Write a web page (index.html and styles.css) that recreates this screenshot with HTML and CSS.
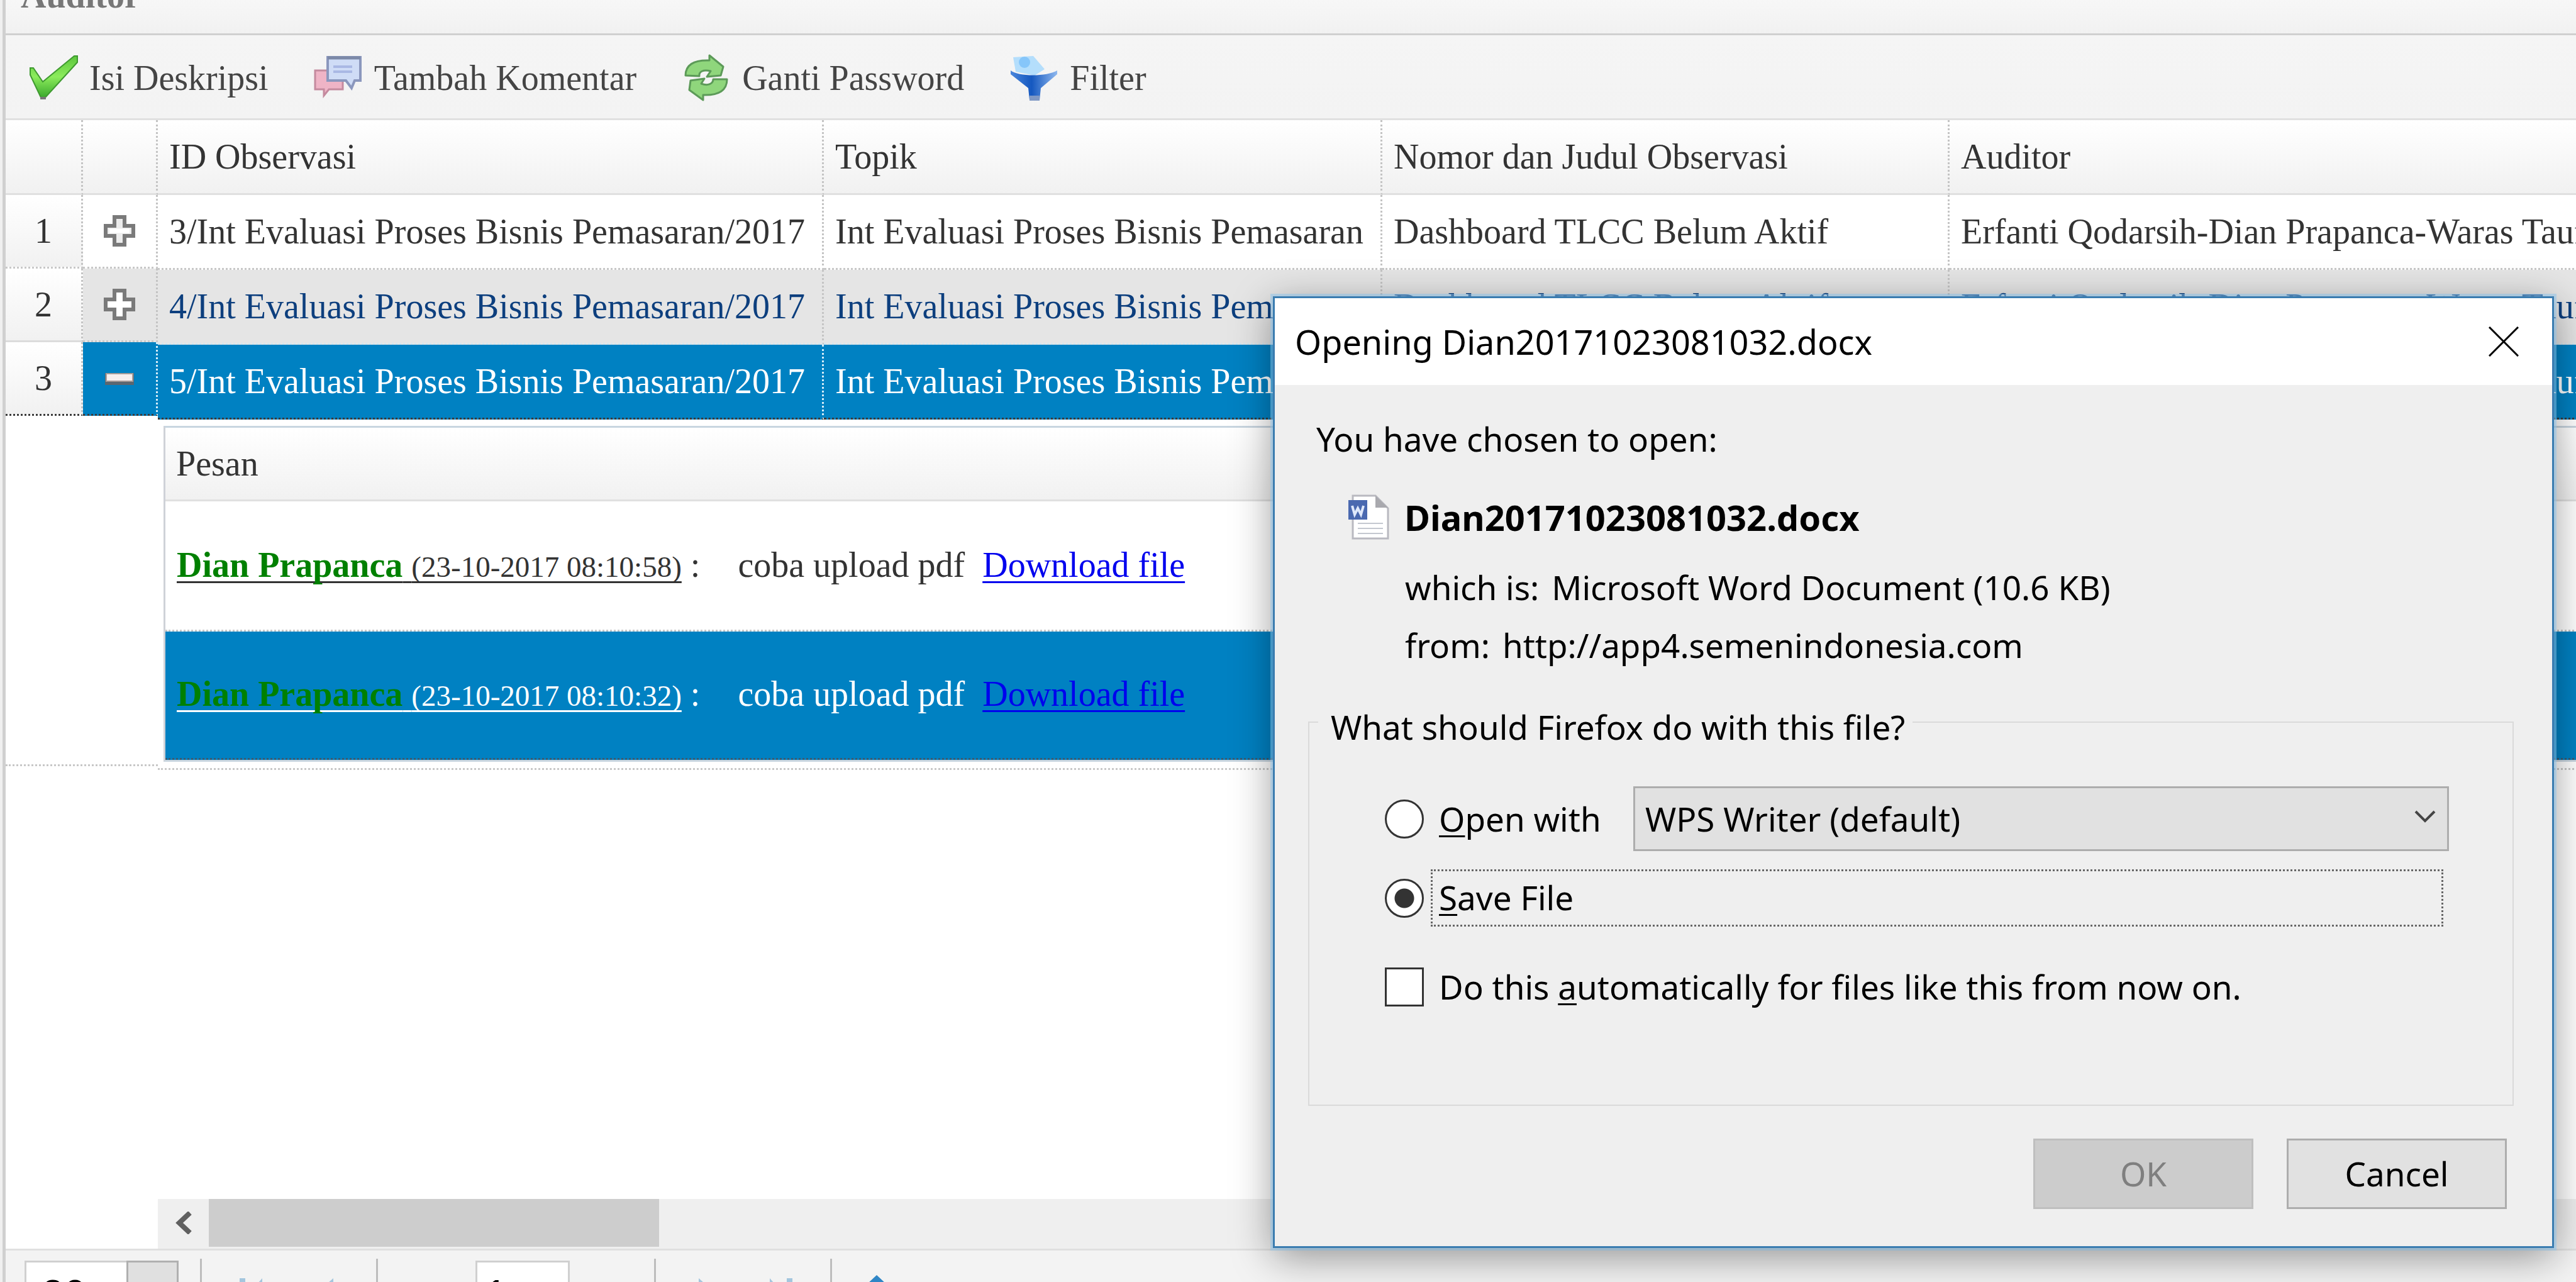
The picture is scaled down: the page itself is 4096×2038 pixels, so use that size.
FILE: index.html
```html
<!DOCTYPE html>
<html lang="id">
<head>
<meta charset="utf-8">
<title>Auditor</title>
<link rel="stylesheet" href="styles.css">
</head>
<body>
<main class="panel">
  <header class="panel-header"><h1 class="panel-title">Auditor</h1></header>

  <nav class="toolbar">
    <button class="tool" type="button">
      <svg class="tool-icon" viewBox="0 0 76 76" aria-hidden="true">
        <defs><linearGradient id="gCheck" x1="0" y1="0" x2="0" y2="1"><stop offset="0" stop-color="#5cc63c"/><stop offset=".5" stop-color="#8cec5c"/><stop offset="1" stop-color="#3aa82c"/></linearGradient></defs>
        <path d="M2 22 L7 22 L22 44 L72 3 L77 3 L77 13 L26 69 L19 69 L2 33 Z" fill="url(#gCheck)" stroke="#3f9a30" stroke-width="2"/>
        <path d="M18 70 h9" stroke="#777" stroke-width="4"/>
      </svg>
      Isi Deskripsi
    </button>
    <button class="tool" type="button">
      <svg class="tool-icon" viewBox="0 0 76 76" aria-hidden="true">
        <path d="M2 26 h44 v30 h-22 l-8 10 v-10 h-14 z" fill="#efb4c6" stroke="#c48a9e" stroke-width="3"/>
        <path d="M22 5 h52 v37 h-9 l-5 12 l-9 -12 h-29 z" fill="#cfdcf6" stroke="#8b97bd" stroke-width="4"/>
        <path d="M22 6 h52" stroke="#7c89a8" stroke-width="5"/>
        <path d="M31 20 h30 M31 28 h30" stroke="#a9b8e4" stroke-width="4"/>
      </svg>
      Tambah Komentar
    </button>
    <button class="tool" type="button">
      <svg class="tool-icon" viewBox="0 0 76 76" aria-hidden="true">
        <g fill="#8fd67c" stroke="#5c9a58" stroke-width="3" stroke-linejoin="round">
          <path d="M6 34 C6 18 18 9 44 10 L44 2 L66 20 L62 34 L40 36 L46 27 C34 24 27 28 28 35 Z"/>
          <path d="M72 40 C72 57 60 66 34 65 L34 73 L12 57 L14 42 L36 39 L31 47 C42 51 50 47 50 40 Z"/>
        </g>
      </svg>
      Ganti Password
    </button>
    <button class="tool" type="button">
      <svg class="tool-icon" viewBox="0 0 76 76" aria-hidden="true">
        <defs><linearGradient id="gFun" x1="0" y1="0" x2="1" y2="0"><stop offset="0" stop-color="#4a86dc"/><stop offset=".45" stop-color="#1558c0"/><stop offset="1" stop-color="#8fb8ee"/></linearGradient></defs>
        <path d="M6 5 L38 3 L56 24 L40 34 L10 28 Z" fill="#b4defc"/>
        <circle cx="24" cy="13" r="9" fill="#86c6fa"/>
        <path d="M2 26 C14 36 60 36 76 26 L76 32 L50 54 L48 73 L32 73 L30 54 L2 32 Z" fill="url(#gFun)"/>
        <path d="M32 66 h16 v8 h-16 z" fill="#7f98c4"/>
      </svg>
      Filter
    </button>
  </nav>

  <section class="grid">
    <div class="locked">
      <table class="locked-table">
        <colgroup><col class="col-number"><col class="col-expander"></colgroup>
        <thead><tr><th></th><th></th></tr></thead>
        <tbody>
          <tr>
            <td class="number">1</td>
            <td class="expander"><button type="button" class="toggle" aria-label="Buka baris 1"><svg viewBox="0 0 50 50"><path d="M17 3 h16 v14 h14 v16 h-14 v14 h-16 v-14 h-14 v-16 h14 z" fill="#ececec" stroke="#7a7a7a" stroke-width="6"/><path d="M9 25 h32" stroke="#fff" stroke-width="7"/></svg></button></td>
          </tr>
          <tr class="hovered">
            <td class="number">2</td>
            <td class="expander"><button type="button" class="toggle" aria-label="Buka baris 2"><svg viewBox="0 0 50 50"><path d="M17 3 h16 v14 h14 v16 h-14 v14 h-16 v-14 h-14 v-16 h14 z" fill="#fff" stroke="#7a7a7a" stroke-width="6"/></svg></button></td>
          </tr>
          <tr class="selected">
            <td class="number">3</td>
            <td class="expander"><button type="button" class="toggle" aria-label="Tutup baris 3"><svg viewBox="0 0 50 50"><path d="M2 17 h46 v19 h-46 z" fill="#5a6670"/><path d="M4 18 h42 v12 h-42 z" fill="#f6efee" stroke="#a89c98" stroke-width="2"/></svg></button></td>
          </tr>
          <tr class="locked-detail"><td colspan="2"></td></tr>
        </tbody>
      </table>
    </div>

    <div class="scroller">
      <div class="viewport">
        <table class="data-table">
          <colgroup><col class="col-id"><col class="col-topic"><col class="col-title"><col class="col-auditor"></colgroup>
          <thead>
            <tr><th>ID Observasi</th><th>Topik</th><th>Nomor dan Judul Observasi</th><th>Auditor</th></tr>
          </thead>
          <tbody>
            <tr>
              <td>3/Int Evaluasi Proses Bisnis Pemasaran/2017</td>
              <td>Int Evaluasi Proses Bisnis Pemasaran</td>
              <td>Dashboard TLCC Belum Aktif</td>
              <td>Erfanti Qodarsih-Dian Prapanca-Waras Taufik</td>
            </tr>
            <tr class="hovered">
              <td>4/Int Evaluasi Proses Bisnis Pemasaran/2017</td>
              <td>Int Evaluasi Proses Bisnis Pemasaran</td>
              <td>Dashboard TLCC Belum Aktif</td>
              <td>Erfanti Qodarsih-Dian Prapanca-Waras Taufik</td>
            </tr>
            <tr class="selected">
              <td>5/Int Evaluasi Proses Bisnis Pemasaran/2017</td>
              <td>Int Evaluasi Proses Bisnis Pemasaran</td>
              <td>Dashboard TLCC Belum Aktif</td>
              <td>Erfanti Qodarsih-Dian Prapanca-Waras Taufik</td>
            </tr>
            <tr class="detail">
              <td colspan="4">
                <table class="messages">
                  <thead><tr><th>Pesan</th></tr></thead>
                  <tbody>
                    <tr><td><u class="stamp"><b class="author">Dian Prapanca</b> <small>(23-10-2017 08:10:58)</small></u> : <span class="message">coba upload pdf</span><a href="#file-1">Download file</a></td></tr>
                    <tr class="selected"><td><u class="stamp"><b class="author">Dian Prapanca</b> <small>(23-10-2017 08:10:32)</small></u> : <span class="message">coba upload pdf</span><a href="#file-2">Download file</a></td></tr>
                  </tbody>
                </table>
              </td>
            </tr>
          </tbody>
        </table>
      </div>
      <div class="scrollbar">
        <button type="button" class="scroll-left" aria-label="Geser ke kiri"><svg viewBox="0 0 28 36"><path d="M24 2 L7 18 L24 34" fill="none" stroke="#606060" stroke-width="8"/></svg></button>
        <div class="scroll-thumb"></div>
      </div>
    </div>
  </section>

  <footer class="pager">
    <div class="pager-size">
      <input class="size-input" type="text" value="20" aria-label="Baris per halaman">
      <button class="size-trigger" type="button" aria-label="Pilih jumlah baris"></button>
    </div>
    <div class="pager-group pager-nav">
      <button type="button" aria-label="Halaman pertama"><svg viewBox="0 0 60 60"><path d="M8 0 h9 v60 h-9 z M44 0 v60 L18 30 z" fill="#a4c6de"/></svg></button>
      <button type="button" aria-label="Halaman sebelumnya"><svg viewBox="0 0 60 60"><path d="M44 0 v60 L10 30 z" fill="#a4c6de"/></svg></button>
    </div>
    <div class="pager-group pager-page">
      <input class="page-input" type="text" value="1" aria-label="Halaman">
    </div>
    <div class="pager-group pager-nav">
      <button type="button" aria-label="Halaman berikutnya"><svg viewBox="0 0 60 60"><path d="M16 0 v60 L50 30 z" fill="#a4c6de"/></svg></button>
      <button type="button" aria-label="Halaman terakhir"><svg viewBox="0 0 60 60"><path d="M43 0 h9 v60 h-9 z M16 0 v60 L42 30 z" fill="#a4c6de"/></svg></button>
    </div>
    <div class="pager-group pager-refresh">
      <button type="button" aria-label="Muat ulang"><svg viewBox="0 0 60 60"><path d="M30 0 L60 28 H0 z" fill="#2f86c6"/></svg></button>
    </div>
  </footer>
</main>

<form class="dialog" role="dialog" aria-labelledby="dialog-title">
  <div class="dialog-bar">
    <h2 class="dialog-title" id="dialog-title">Opening Dian20171023081032.docx</h2>
    <button class="dialog-close" type="button" aria-label="Close"><svg viewBox="0 0 48 48"><path d="M1 1 L47 47 M47 1 L1 47" stroke="#000" stroke-width="3"/></svg></button>
  </div>
  <div class="dialog-body">
    <p class="intro">You have chosen to open:</p>
    <div class="file">
      <svg class="file-icon" viewBox="0 0 66 72" aria-hidden="true">
        <path d="M8 2 h36 l20 20 v48 h-56 z" fill="#fff" stroke="#b9b9c0" stroke-width="3"/>
        <path d="M44 2 v19 h20 z" fill="#a9a9ae"/>
        <path d="M16 46 h40 M16 54 h40 M16 62 h40" stroke="#c4c8d0" stroke-width="2"/>
        <path d="M1 9 h30 v31 h-30 z" fill="#4a69b0"/>
        <path d="M7 18 l4 14 l5 -10 l5 10 l4 -14" fill="none" stroke="#dfe8fb" stroke-width="4"/>
      </svg>
      <strong class="file-name">Dian20171023081032.docx</strong>
    </div>
    <dl class="facts">
      <div class="fact"><dt>which is:</dt><dd>Microsoft Word Document (10.6 KB)</dd></div>
      <div class="fact"><dt>from:</dt><dd>http://app4.semenindonesia.com</dd></div>
    </dl>
    <fieldset class="choices">
      <legend>What should Firefox do with this file?</legend>
      <div class="choice choice-open">
        <input type="radio" name="action" id="open-with">
        <label class="open-label" for="open-with"><u>O</u>pen with</label>
        <div class="select-wrap">
          <select aria-label="Application"><option>WPS Writer (default)</option></select>
          <svg class="select-arrow" viewBox="0 0 34 20" aria-hidden="true"><path d="M2 2 L17 17 L32 2" fill="none" stroke="#444" stroke-width="4"/></svg>
        </div>
      </div>
      <div class="choice choice-save">
        <input type="radio" name="action" id="save-file" checked>
        <label class="save-label" for="save-file"><u>S</u>ave File</label>
      </div>
      <div class="choice choice-auto">
        <input type="checkbox" id="auto">
        <label for="auto">Do this <u>a</u>utomatically for files like this from now on.</label>
      </div>
    </fieldset>
    <div class="actions">
      <button class="action" type="submit" disabled>OK</button>
      <button class="action" type="button">Cancel</button>
    </div>
  </div>
</form>
</body>
</html>
```
FILE: styles.css
```css
* { box-sizing: border-box; }

body {
  margin: 0;
  height: 100vh;
  overflow: hidden;
  position: relative;
  background: #f0f0f0;
  color: #333;
  font-family: "Liberation Serif", "Times New Roman", serif;
  font-size: 56px;
}

button, input, select { font: inherit; color: inherit; border-radius: 0; margin: 0; }
button { border: 0; padding: 0; background: none; }
svg { display: block; }

/* Panel */
.panel {
  height: 100%;
  margin-left: 4px;
  border-left: 5px solid #d0d0d0;
  display: flex;
  flex-direction: column;
  background: #fff;
}
.panel-header {
  flex: none;
  height: 56px;
  padding-left: 24px;
  border-bottom: 3px solid #d0d0d0;
  background: linear-gradient(#f7f7f7, #f1f1f1);
}
.panel-title {
  margin: -35px 0 0;
  line-height: 56px;
  font-size: 56px;
  color: #777;
}
.toolbar {
  flex: none;
  display: flex;
  gap: 72px;
  height: 135px;
  padding: 4px 37px 0;
  align-items: center;
  border-bottom: 3px solid #e0e0e0;
  background: linear-gradient(#f5f5f5, #f3f3f3);
}
.tool { display: flex; align-items: center; gap: 20px; color: #444; }
.tool-icon { width: 76px; height: 76px; overflow: visible; }

/* Grid */
.grid { flex: 1; min-height: 0; display: flex; }
.locked { flex: none; }
.scroller { flex: 1; min-width: 0; display: flex; flex-direction: column; }
.viewport { flex: 1; min-height: 0; overflow: hidden; }

table { border-collapse: separate; border-spacing: 0; table-layout: fixed; }
th, td { padding: 0; text-align: left; font-weight: normal; white-space: nowrap; }
.locked-table { width: 242px; }
.col-number { width: 123px; }
.col-expander { width: 119px; }
.data-table { width: 4250px; }
.col-id { width: 1059px; }
.col-topic { width: 888px; }
.col-title { width: 902px; }

th {
  height: 119px;
  line-height: 116px;
  border-bottom: 3px solid #e0e0e0;
  background: linear-gradient(#fff, #f1f1f1);
}
.locked-table th, .locked-table td, .data-table > thead th, .data-table > tbody > tr > td { border-right: 3px dotted #c4c4c4; }
.data-table > thead th, .data-table > tbody > tr > td { padding-left: 18px; }
.data-table > tbody > tr > td { line-height: 116px; border-bottom: 3px dotted #c8c8c8; }
.locked-table td { line-height: 114px; height: 117px; border-bottom: 3px dotted #c8c8c8; }
.number { text-align: center; background: linear-gradient(#fff, #f1f1f1); }
.toggle { display: block; width: 50px; margin: 0 auto; }

.data-table .hovered > td, .hovered .expander { background: #e5e5e5; }
.data-table .hovered > td { color: #0d3f7e; border-bottom-color: #d4e6f0; }
.data-table .selected > td, .selected .expander { background: #0081c2; color: #fff; }
.locked-table .selected td, .data-table .selected > td { border-bottom-color: #3a3a3a; }
.locked-table .selected .expander, .data-table > tbody > .selected > td { border-right-color: #d4ecf8; }
.locked-table .hovered .number { border-bottom: 3px solid #dcdcdc; }

.locked-table .locked-detail td { height: 557px; border-right: 0; }
.data-table > tbody > .detail > td { padding: 10px 10px 10px 9px; border-right: 0; }

/* Messages of an expanded row */
.messages { width: 100%; border: 3px solid #c9d6e0; border-left-color: #cfd2d8; }
.messages th { height: 117px; line-height: 114px; padding-left: 17px; }
.messages td { height: 207px; line-height: 64px; padding-left: 18px; border-bottom: 3px dotted #c8c8c8; }
.messages .selected td { height: 204px; border-bottom-color: #3a5a70; }
.stamp { text-decoration: underline 3px; text-underline-offset: 7px; text-decoration-skip-ink: none; }
.author { color: #008000; }
.stamp small { font-size: 47px; }
.message { margin: 0 28px 0 46px; }
.messages a { color: #0000ee; text-decoration: underline 3px; text-underline-offset: 7px; text-decoration-skip-ink: none; }

/* Horizontal scrollbar */
.scrollbar { flex: none; display: flex; height: 79px; padding-bottom: 3px; background: #efefef; }
.scroll-left { width: 81px; display: flex; align-items: center; justify-content: center; }
.scroll-left svg { width: 28px; }
.scroll-thumb { width: 716px; background: #cdcdcd; }

/* Pager, cut off by the window's lower edge */
.pager {
  flex: none;
  display: flex;
  height: 53px;
  overflow: hidden;
  padding-top: 13px;
  border-top: 3px solid #e0e0e0;
  background: #f3f3f3;
}
.pager-size { flex: none; display: flex; width: 309px; padding: 3px 34px 0 30px; }
.size-input, .page-input {
  height: 108px;
  padding: 0 12px;
  border: 3px solid #d0d0d0;
  background: #fff;
  color: #000;
  font-family: "Liberation Sans", Arial, sans-serif;
  font-size: 64px;
}
.size-input { width: 162px; padding-left: 24px; border-right: 0; }
.size-trigger { flex: 1; height: 108px; border: 3px solid #b0b0b0; background: #e0e0e0; }
.pager-group { flex: none; display: flex; height: 120px; border-left: 3px solid #bdbdbd; }
.pager-nav { width: 280px; padding-top: 31px; justify-content: space-evenly; align-items: flex-start; }
.pager-nav svg, .pager-refresh svg { width: 60px; }
.pager-page { width: 442px; padding: 3px 0 0 155px; }
.page-input { width: 150px; }
.pager-refresh { padding: 26px 0 0 41px; align-items: flex-start; }

/* Download dialog */
.dialog {
  position: absolute;
  top: 471px;
  right: 35px;
  width: 2037px;
  border: 3px solid #3a7cb0;
  background: #efefef;
  color: #000;
  font-family: "Segoe UI", "Noto Sans", sans-serif;
  font-size: 53px;
  line-height: 64px;
  box-shadow: 0 0 0 4px rgba(140, 196, 236, .5), 0 14px 60px rgba(0, 0, 0, .4);
}
.dialog-bar { display: flex; justify-content: space-between; align-items: center; height: 138px; padding: 0 53px 0 32px; background: #fff; }
.dialog-title { margin: 0; font-size: 54px; font-weight: normal; }
.dialog-close { width: 48px; }
.dialog-body { padding: 54px 61px 59px 53px; }
.intro { margin: 0 0 0 13px; }
.file { display: flex; align-items: center; gap: 24px; margin: 56px 0 0 63px; }
.file-icon { width: 66px; }
.file-name { font-size: 56px; font-weight: bold; }
.facts { display: grid; gap: 28px; margin: 44px 0 0 154px; }
.fact { display: flex; gap: 20px; }
.fact dd { margin: 0; }
.choices { margin: 50px 0 0; padding: 0 101px 155px 14px; border: 2px solid #dadada; }
.choices legend { padding: 16px 12px 0 20px; }
.choice { display: flex; align-items: center; padding-left: 106px; }
.choice u { text-decoration: underline 3px; text-underline-offset: 6px; text-decoration-skip-ink: none; }
.choice input {
  appearance: none;
  flex: none;
  width: 62px;
  height: 62px;
  margin-right: 24px;
  border: 3px solid #333;
  background: #fff;
}
.choice input[type="radio"] { border-radius: 50%; }
.choice input[type="radio"]:checked { background: radial-gradient(circle, #333 15px, #fff 16px); }
.choice-open { padding-top: 62px; }
.open-label { width: 309px; }
.select-wrap { flex: 1; position: relative; }
.select-wrap select {
  appearance: none;
  display: block;
  width: 100%;
  height: 103px;
  padding: 0 16px;
  border: 3px solid #adadad;
  background: #e1e1e1;
}
.select-arrow { position: absolute; top: 38px; right: 21px; width: 34px; pointer-events: none; }
.choice-save { padding-top: 29px; padding-right: 9px; }
.choice-save input { margin-right: 11px; }
.save-label { flex: 1; height: 91px; padding: 10px; border: 3px dotted #666; }
.choice-auto { padding-top: 64px; white-space: nowrap; }
.actions { display: flex; justify-content: flex-end; gap: 53px; margin-top: 52px; padding-right: 11px; }
.action { width: 350px; height: 112px; border: 3px solid #adadad; background: #e1e1e1; }
.action:disabled { border-color: #bfbfbf; background: #cccccc; color: #7f7f7f; }
```
